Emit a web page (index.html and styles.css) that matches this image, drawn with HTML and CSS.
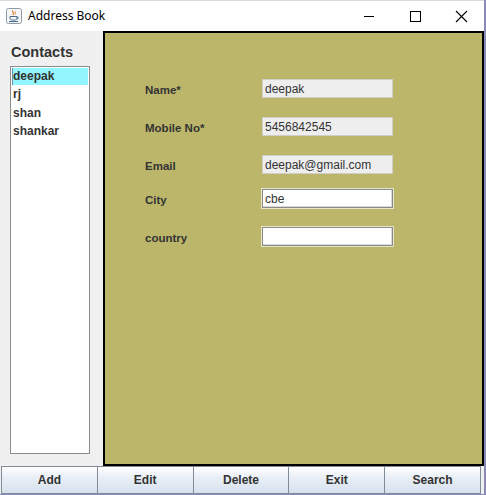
FILE: index.html
```html
<!DOCTYPE html>
<html>
<head>
<meta charset="utf-8">
<link rel="stylesheet" href="styles.css">
</head>
<body>
<div class="window">
  <div class="titlebar">
    <svg class="appicon" width="16" height="16" viewBox="0 0 16 16">
      <rect x="0.5" y="0.5" width="15" height="15" rx="2" fill="#f4f6f9" stroke="#8f98a6"/>
      <path d="M7 2.5 C5.5 4 8.5 5 7 7" stroke="#e07b22" stroke-width="1.2" fill="none"/>
      <path d="M9.5 3.5 C8.5 4.5 10 5.5 9 6.5" stroke="#e07b22" stroke-width="1" fill="none"/>
      <path d="M4 8.5 H11 V10 C11 11.5 10 12 8.5 12 H6.5 C5 12 4 11.5 4 10 Z" fill="none" stroke="#4a6b8c" stroke-width="1"/>
      <path d="M11 9 C12.8 9 12.8 11 11 11" fill="none" stroke="#4a6b8c" stroke-width="0.9"/>
      <path d="M3 13.5 H12" stroke="#4a6b8c" stroke-width="1"/>
    </svg>
    <span class="title">Address Book</span>
    <div class="controls">
      <svg class="ctl" width="46" height="31" viewBox="0 0 46 31"><path d="M18 15.5 H28" stroke="#000" stroke-width="1"/></svg>
      <svg class="ctl" width="46" height="31" viewBox="0 0 46 31"><rect x="18.5" y="10.5" width="10" height="10" fill="none" stroke="#000"/></svg>
      <svg class="ctl" width="46" height="31" viewBox="0 0 46 31"><path d="M18 10 L29 21 M29 10 L18 21" stroke="#000" stroke-width="1.1"/></svg>
    </div>
  </div>
  <div class="main">
    <div class="sidebar">
      <div class="contacts-title">Contacts</div>
      <ul class="list">
        <li class="item selected">deepak</li>
        <li class="item">rj</li>
        <li class="item">shan</li>
        <li class="item">shankar</li>
      </ul>
    </div>
    <div class="panel">
      <div class="form">
        <div class="row"><span class="label">Name*</span><span class="field readonly">deepak</span></div>
        <div class="row"><span class="label">Mobile No*</span><span class="field readonly">5456842545</span></div>
        <div class="row"><span class="label">Email</span><span class="field readonly">deepak@gmail.com</span></div>
        <div class="row city"><span class="label">City</span><span class="field edit">cbe</span></div>
        <div class="row"><span class="label">country</span><span class="field edit"></span></div>
      </div>
    </div>
  </div>
  <div class="buttons">
    <button class="btn">Add</button>
    <button class="btn">Edit</button>
    <button class="btn">Delete</button>
    <button class="btn">Exit</button>
    <button class="btn">Search</button>
  </div>
</div>
</body>
</html>
```
FILE: styles.css
```css
html, body {
  margin: 0;
  padding: 0;
  background: #f0f0f0;
}
.window {
  width: 486px;
  height: 495px;
  box-sizing: border-box;
  border-right: 2px solid #8a8ab8;
  border-bottom: 1px solid #8a8ab8;
  background: #f0f0f0;
  display: flex;
  flex-direction: column;
  overflow: hidden;
}
.titlebar {
  height: 31px;
  flex: none;
  background: #ffffff;
  display: flex;
  align-items: center;
  box-sizing: border-box;
  border-top: 1px solid #d8d8e0;
}
.appicon {
  margin-left: 6px;
  margin-top: -1px;
}
.title {
  margin-left: 6px;
  font-family: "Noto Sans", "Open Sans", sans-serif;
  font-size: 12px;
  color: #000;
  margin-top: -1px;
}
.controls {
  margin-left: auto;
  display: flex;
}
.ctl {
  display: block;
}
.main {
  flex: 1;
  display: flex;
  min-height: 0;
}
.sidebar {
  width: 103px;
  flex: none;
  display: flex;
  flex-direction: column;
  padding: 13px 0 12px 10px;
  box-sizing: border-box;
}
.contacts-title {
  font-family: "Liberation Sans", Arial, sans-serif;
  font-weight: bold;
  font-size: 14.5px;
  color: #333;
  margin-left: 1px;
  height: 22px;
  line-height: 17px;
}
.list {
  list-style: none;
  margin: 0;
  padding: 1px;
  width: 80px;
  flex: 1;
  box-sizing: border-box;
  background: #fff;
  border: 1px solid #8c8c8c;
}
.item {
  font-family: "Liberation Sans", Arial, sans-serif;
  font-weight: bold;
  font-size: 12px;
  color: #333;
  height: 18.5px;
  line-height: 18px;
  padding-left: 1px;
}
.item.selected {
  background: #93f5fd;
  border-left: 1px solid #6a8db0;
  height: 17px;
  line-height: 17px;
  padding-left: 0;
}
.panel {
  flex: 1;
  border: 2px solid #000;
  background: #bcb66b;
  box-sizing: border-box;
  margin-right: 0;
}
.form {
  display: flex;
  flex-direction: column;
  padding: 46px 0 0 40px;
}
.row {
  display: flex;
  align-items: center;
  height: 19px;
  margin-bottom: 19px;
}
.row.city {
  margin-top: -4px;
}
.label {
  width: 117px;
  font-family: "Liberation Sans", Arial, sans-serif;
  font-weight: bold;
  font-size: 11.5px;
  color: #333;
  padding-top: 2px;
}
.field {
  width: 131px;
  height: 19px;
  box-sizing: border-box;
  font-family: "Liberation Sans", Arial, sans-serif;
  font-size: 12px;
  color: #333;
  line-height: 18px;
  padding-left: 2px;
}
.field.readonly {
  background: #eeeeee;
  border: 1px solid #cfcfc8;
}
.field.edit {
  background: #ffffff;
  border: 1px solid #8a8a8a;
  box-shadow: inset -1px -1px 0 #d8d8d8;
  outline: 1px solid #e8e6c8;
  outline-offset: 0;
}
.buttons {
  height: 28px;
  flex: none;
  display: flex;
  padding: 0 3px 0 1px;
}
.btn {
  flex: 1;
  margin: 0;
  height: 28px;
  box-sizing: border-box;
  border: 1px solid #7e8c9a;
  background: linear-gradient(#ffffff, #e9eff6 40%, #d6e1ee);
  font-family: "Liberation Sans", Arial, sans-serif;
  font-weight: bold;
  font-size: 12px;
  color: #333;
  padding: 0;
}
.btn + .btn {
  border-left: 0;
}
```
